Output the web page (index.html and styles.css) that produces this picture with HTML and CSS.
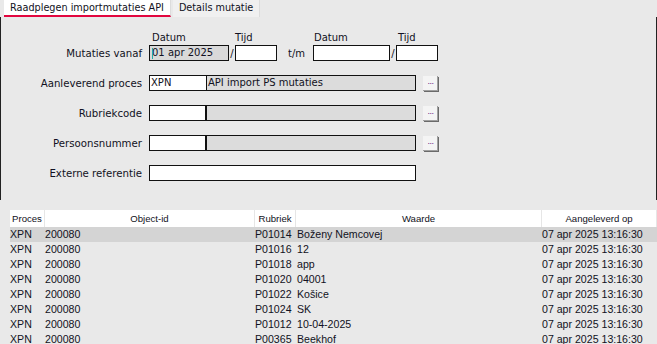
FILE: index.html
```html
<!DOCTYPE html>
<html lang="nl">
<head>
  <meta charset="UTF-8" />
  <title>Raadplegen importmutaties API</title>
  <link rel="stylesheet" href="styles.css">
</head>
<body>
  <div class="tabs">
    <div class="tab active">Raadplegen importmutaties API</div>
    <div class="tab">Details mutatie</div>
  </div>

  <div class="panel">
    <div class="heads">
      <span class="h-date">Datum</span>
      <span class="h-time">Tijd</span>
      <span class="h-date2">Datum</span>
      <span class="h-time">Tijd</span>
    </div>

    <div class="row">
      <label class="lbl">Mutaties vanaf</label>
      <div class="field date ro"><span class="caret"></span>01 apr 2025</div>
      <span class="sep">/</span>
      <div class="field time"></div>
      <span class="tm">t/m</span>
      <div class="field date2"></div>
      <span class="sep">/</span>
      <div class="field time"></div>
    </div>

    <div class="row">
      <label class="lbl">Aanleverend proces</label>
      <div class="combo">
        <div class="code thin">XPN</div>
        <div class="desc">API import PS mutaties</div>
      </div>
      <button class="pick">...</button>
    </div>

    <div class="row">
      <label class="lbl">Rubriekcode</label>
      <div class="combo">
        <div class="code"></div>
        <div class="desc"></div>
      </div>
      <button class="pick">...</button>
    </div>

    <div class="row">
      <label class="lbl">Persoonsnummer</label>
      <div class="combo">
        <div class="code"></div>
        <div class="desc"></div>
      </div>
      <button class="pick">...</button>
    </div>

    <div class="row">
      <label class="lbl">Externe referentie</label>
      <div class="field wide"></div>
    </div>
  </div>

  <div class="grid">
    <div class="thead">
      <div class="c-proc">Proces</div>
      <div class="c-obj">Object-id</div>
      <div class="c-rub">Rubriek</div>
      <div class="c-val">Waarde</div>
      <div class="c-date">Aangeleverd op</div>
    </div>
    <div id="rows"></div>
  </div>

  <script>
    const rows = [
      ['P01014', 'Boženy Nemcovej'],
      ['P01016', '12'],
      ['P01018', 'app'],
      ['P01020', '04001'],
      ['P01022', 'Košice'],
      ['P01024', 'SK'],
      ['P01012', '10-04-2025'],
      ['P00365', 'Beekhof']
    ];
    const body = document.getElementById('rows');
    rows.forEach((r, i) => {
      const div = document.createElement('div');
      div.className = 'trow' + (i === 0 ? ' sel' : '');
      div.innerHTML = `
        <div class="c-proc">XPN</div>
        <div class="c-obj">200080</div>
        <div class="c-rub">${r[0]}</div>
        <div class="c-val">${r[1]}</div>
        <div class="c-date">07 apr 2025 13:16:30</div>
      `;
      body.appendChild(div);
    });
  </script>
</body>
</html>
```

FILE: styles.css
```css
* {
  box-sizing: border-box;
}

body {
  margin: 0;
  background: #e9e9e9;
  font-family: 'DejaVu Sans', sans-serif;
  font-size: 10px;
  color: #111122;
  overflow: hidden;
}

.tabs {
  display: flex;
  height: 17px;
  padding-left: 4px;
}

.tab {
  padding: 1px 6px 0 6px;
  background: #f0f0f0;
  border-right: 1px solid #dcdcdc;
  line-height: 14px;
  font-size: 9.7px;
}

.tab.active {
  background: #ffffff;
  border-bottom: 2px solid #e2063f;
  margin-right: 2px;
}

.panel {
  height: 183px;
  border-left: 1px solid #222;
  border-right: 1px solid #222;
  padding-top: 14px;
}

.heads {
  display: flex;
  height: 14px;
  padding-left: 151px;
}

.heads span {
  line-height: 14px;
}

.h-date { width: 83px; }
.h-date2 { width: 84px; margin-left: 39px; }
.h-time { width: 40px; }

.row {
  display: flex;
  align-items: center;
  height: 16px;
  margin-bottom: 14px;
}

.lbl {
  width: 148px;
  padding-right: 7px;
  text-align: right;
  font-size: 10.2px;
}

.field {
  height: 16px;
  border: 1px solid #111;
  background: #fff;
  line-height: 14px;
  padding-left: 2px;
  position: relative;
}

.field.ro {
  background: #d9d9d9;
}

.caret {
  position: absolute;
  left: 2px;
  top: 2px;
  width: 1px;
  height: 11px;
  background: #2aa;
}

.date { width: 80px; }
.date2 { width: 77px; }
.time { width: 42px; }
.wide { width: 267px; }

.sep {
  width: 6px;
  text-align: center;
}

.tm {
  width: 36px;
  padding-left: 11px;
}

.combo {
  display: flex;
  width: 267px;
  height: 16px;
  border: 1px solid #111;
  background: #dcdcdc;
}

.combo .code {
  width: 57px;
  background: #fff;
  border-right: 2px solid #111;
  line-height: 14px;
  padding-left: 1px;
}

.combo .code.thin {
  border-right-width: 1px;
}

.combo .desc {
  flex: 1;
  line-height: 14px;
  padding-left: 1px;
}

.pick {
  width: 15px;
  height: 15px;
  margin-left: 7px;
  padding: 0 0 3px 0;
  border: none;
  background: #f4f4f4;
  box-shadow: inset -1px -1px 0 #a0a0a0, 1px 1px 0 #6a6a6a;
  color: #6a1b8a;
  font-family: 'Liberation Sans', sans-serif;
  font-size: 9px;
  line-height: 9px;
  letter-spacing: -0.5px;
}

.grid {
  margin-top: 10px;
  margin-left: 10px;
  font-family: 'Liberation Sans', sans-serif;
  font-size: 10.6px;
}

.thead, .trow {
  display: grid;
  grid-template-columns: 35px 210px 41px 246px 115px;
}

.thead {
  height: 17px;
  background: #fff;
  font-size: 9.6px;
  line-height: 17px;
}

.thead div {
  text-align: center;
  border-right: 1px solid #e6e6e6;
}

.trow {
  height: 15px;
  line-height: 15px;
  white-space: nowrap;
}

.trow.sel {
  background: #d4d4d4;
}

.trow .c-val {
  padding-left: 1px;
}
```
